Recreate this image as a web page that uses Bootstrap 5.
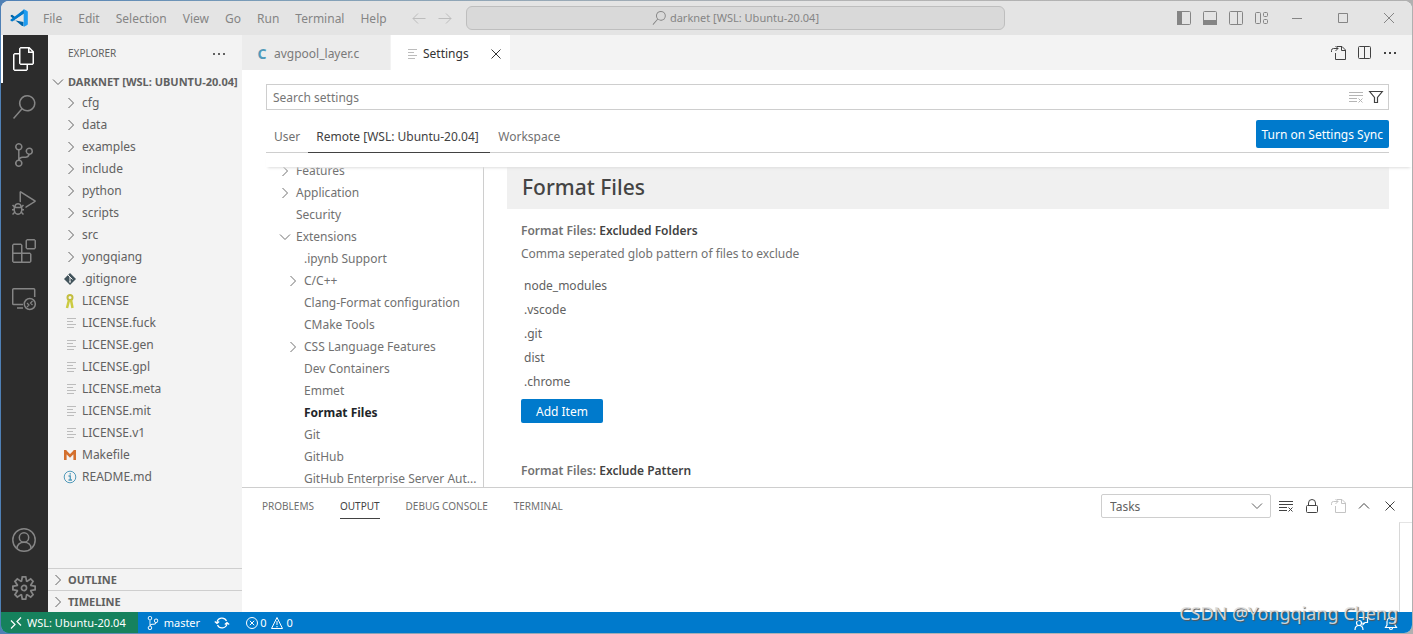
<!DOCTYPE html>
<html lang="en">
<head>
<meta charset="utf-8">
<meta name="viewport" content="width=device-width, initial-scale=1">
<title>Settings - darknet [WSL: Ubuntu-20.04] - Visual Studio Code</title>
<link href="https://cdn.jsdelivr.net/npm/bootstrap@5.3.0/dist/css/bootstrap.min.css" rel="stylesheet">
<style>
  :root { --blue: #007acc; --muted: #717171; --fg: #616161; --line: #cecece; }
  body { font-family: "Noto Sans", "Segoe UI", sans-serif; font-size: 12px; line-height: 22px; color: var(--fg); background: linear-gradient(90deg, #4f80b5, #7f9fb8 20%, #b4b4b4 60%, #b0b0b0); }
  a { color: inherit; text-decoration: none; }
  button { background: none; border: 0; padding: 0; color: inherit; }
  svg { display: block; flex: none; fill: none; stroke: currentColor; }
  .i16 { width: 16px; height: 16px; }
  .i24 { width: 24px; height: 24px; }
  .solid { fill: currentColor; stroke: none; }
  .frame { height: 100vh; padding: 1px; }
  .shell { border-radius: 8px; background: #fff; }

  .titlebar { height: 34px; background: #e4e4e4; color: #858585; padding-left: 9px; }
  .menus { gap: 16px; margin-left: 15px; padding-top: 2px; }
  .history { gap: 10px; margin: 0 13px 0 24px; color: #bdbdbd; }
  .command { flex: 0 1 38.5%; height: 24px; background: #d9d9d9; border: 1px solid #bebebe; border-radius: 6px; font-size: 11px; }
  .winbtn { width: 46px; height: 34px; }
  .layouts { gap: 10px; margin-right: 4px; }

  .activity { width: 47px; background: #2c2c2c; color: #858585; }
  .activity button { width: 47px; height: 48px; border-left: 2px solid transparent; padding-right: 4px; }
  .activity button.now { border-color: #fff; color: #fff; }

  .side { width: 194px; background: #f3f3f3; }
  .side h2 { font-size: 10px; line-height: 35px; padding: 1px 15px 0 20px; }
  .sect { font-size: 11px; line-height: 21px; font-weight: 700; padding-left: 2px; height: 21px; gap: 2px; width: 100%; }
  .split { border-top: 1px solid var(--line); }
  .node { height: 22px; gap: 4px; padding-left: 14px; }
  .node.folder { gap: 3px; padding-left: 15px; }

  .tabs { height: 35px; background: #f3f3f3; }
  .etab { height: 35px; padding: 2px 0 0 12px; }
  .etab.idle { width: 148px; margin-right: 1px; background: #ececec; color: #7a7a7a; }
  .etab.now { width: 119px; background: #fff; color: #333; padding-right: 6px; }
  .clang { font-weight: 700; font-size: 14px; color: #519aba; width: 16px; text-align: center; }
  .acts { gap: 10px; padding-right: 14px; color: #424242; }

  .settings { padding: 14px 23px 0 24px; }
  .query { border: 1px solid var(--line); height: 26px; padding-right: 4px; }
  .query input { border: 0; outline: 0; padding: 2px 6px 0; color: var(--fg); }
  .query input::placeholder { color: #767676; opacity: 1; }
  .scopes { height: 43px; border-bottom: 1px solid var(--line); padding-top: 10px; }
  .scopes a { padding: 6px 8px 0; height: 33px; color: var(--muted); }
  .scopes a.now { min-width: 182px; color: #424242; border-bottom: 1px solid #424242; }
  .btn-blue { background: var(--blue); color: #fff; border-radius: 2px; }
  .sync { height: 28px; padding: 1px 6px 0; }
  .veil { height: 14px; margin: 0 -23px 0 0; box-shadow: 0 3px 3px -2px #ddd; position: relative; }
  .toc { width: 218px; border-right: 1px solid var(--line); color: var(--muted); }
  .toc ul { margin: -7px 0 0; }
  .toc a { height: 22px; padding-left: 11px; gap: 3px; }
  .toc .sub a { padding-left: 19px; }
  .detail { margin-left: 23px; }
  .group { background: #f0f0f0; height: 42px; padding-left: 15px; font-size: 21px; line-height: 40px; font-weight: 500; color: #444; }
  .item { padding: 10px 14px 0; }
  .item h3 { font-size: 12px; line-height: 23px; font-weight: 600; color: #424242; }
  .item h3 span, .item p { color: var(--muted); }
  .item p { line-height: 23px; }
  .globs { margin: 9px 0 5px; padding-left: 3px; }
  .globs li { line-height: 24px; }
  .add { height: 24px; padding: 1px 15px 0; line-height: 23px; }
  .item + .item { padding-top: 36px; }

  .panel { height: 125px; border-top: 1px solid var(--line); }
  .phead { height: 36px; }
  .ptabs { gap: 26px; padding-left: 20px; font-size: 10px; color: #6f6f6f; }
  .ptabs a { height: 26px; padding: 3px 0; line-height: 20px; border-bottom: 1px solid transparent; }
  .ptabs a.now { color: #424242; border-color: #424242; }
  .channel { width: 170px; height: 24px; margin-right: 7px; padding: 1px 8px 0; font-size: 12px; line-height: 20px; border: 1px solid var(--line); border-radius: 2px; color: var(--fg);
    background-image: url("data:image/svg+xml,%3Csvg xmlns='http://www.w3.org/2000/svg' viewBox='0 0 16 16'%3E%3Cpath d='M3 5.5l5 5 5-5' fill='none' stroke='%23616161'/%3E%3C/svg%3E"); background-position: right 5px center; background-size: 16px; }
  .ruler { width: 13px; border-left: 1px solid #d8d8d8; border-top: 1px solid #e4e4e4; margin-top: -2px; }

  .status { height: 21px; background: var(--blue); color: #fff; font-size: 11px; line-height: 21px; padding-right: 13px; }
  .remote { background: #16825d; height: 21px; padding: 0 12px 0 7px; gap: 3px; }
  .gap-item { margin-left: 14px; }
  .watermark { right: 14px; bottom: 7px; font: 18px/26px "Noto Sans", sans-serif; color: rgba(225,225,225,.9); text-shadow: 1px 1px 1px #555; pointer-events: none; }
</style>
</head>
<body>
<svg width="0" height="0" class="position-absolute" aria-hidden="true">
  <symbol id="right" viewBox="0 0 16 16"><path d="M5.500 3l5 5-5 5"/></symbol>
  <symbol id="down" viewBox="0 0 16 16"><path d="M3 5.500l5 5 5-5"/></symbol>
  <symbol id="up" viewBox="0 0 16 16"><path d="M3 10.500l5-5 5 5"/></symbol>
  <symbol id="close" viewBox="0 0 16 16"><path d="M3.500 3.500l9 9m0-9l-9 9"/></symbol>
  <symbol id="dots" viewBox="0 0 16 16"><path d="M2 7h2v2H2zM7 7h2v2H7zM12 7h2v2h-2z" fill="currentColor" stroke="none"/></symbol>
  <symbol id="lines" viewBox="0 0 16 16"><path d="M5 3.500h9M5 6.500h6M5 9.500h9M5 12.500h7" stroke="#bcbcbc"/></symbol>
  <symbol id="clear" viewBox="0 0 16 16"><path d="M1 3.500h14M1 6.500h14M1 9.500h8M1 12.500h8M10.500 9.500l4 4m0-4l-4 4"/></symbol>
  <symbol id="goto" viewBox="0 0 16 16"><path d="M7 1.500h5l3.500 3.500v9.500h-10V8M11.500 1.500v4h4M1.500 7V5.500q0-2 2-2H8M5.500 1l2.500 2.500L5.500 6"/></symbol>
  <symbol id="lens" viewBox="0 0 24 24"><path class="solid" d="M15.250 0a8.250 8.250 0 0 0-6.180 13.720L1 22.880l1.120 1 8.050-9.120A8.251 8.251 0 1 0 15.250.01V0zm0 15a6.750 6.750 0 1 1 0-13.500 6.750 6.750 0 0 1 0 13.500z"/></symbol>
  <symbol id="branch" viewBox="0 0 24 24"><path class="solid" d="M21.007 8.222A3.738 3.738 0 0 0 15.045 5.200a3.737 3.737 0 0 0 1.156 6.583 2.988 2.988 0 0 1-2.668 1.670h-2.990a4.456 4.456 0 0 0-2.989 1.165V7.400a3.737 3.737 0 1 0-1.494 0v9.117a3.776 3.776 0 1 0 1.816.099 2.990 2.990 0 0 1 2.668-1.667h2.990a4.484 4.484 0 0 0 4.223-3.039 3.736 3.736 0 0 0 3.250-3.687zM4.565 3.738a2.242 2.242 0 1 1 4.484 0 2.242 2.242 0 0 1-4.484 0zm4.484 16.441a2.242 2.242 0 1 1-4.484 0 2.242 2.242 0 0 1 4.484 0zm8.221-9.715a2.242 2.242 0 1 1 0-4.485 2.242 2.242 0 0 1 0 4.485z"/></symbol>
</svg>

<div class="frame">
<div class="shell h-100 d-flex flex-column overflow-hidden position-relative">

  <header class="titlebar d-flex align-items-center flex-shrink-0">
    <svg width="18" height="18" viewBox="0 0 100 100" class="border-0" aria-label="Visual Studio Code"><g stroke="none"><path fill="#0065a9" d="M96 15L75 5 30 46 12 32 4 35v7l63 53 8 0V72L4 58v7l8 3 63-41z"/><path fill="#007acc" d="M4 65l8 4 63-44V5L4 58z"/><path fill="#1f9cf0" d="M72 98c2 1 4 0 6 0l18-9c2-1 3-3 3-5V16c0-2-1-4-3-5L78 2c-2-1-5-1-6 1 3-1 4 0 4 3v88c0 3-1 5-4 4z"/></g></svg>
    <nav class="menus d-flex" aria-label="Application menu">
      <a href="#">File</a><a href="#">Edit</a><a href="#">Selection</a><a href="#">View</a><a href="#">Go</a><a href="#">Run</a><a href="#">Terminal</a><a href="#">Help</a>
    </nav>
    <div class="history d-flex">
      <button aria-label="Go back"><svg class="i16" viewBox="0 0 16 16"><path d="M14.500 8.500H2M7 3.500l-5 5 5 5"/></svg></button>
      <button aria-label="Go forward"><svg class="i16" viewBox="0 0 16 16"><path d="M1.500 8.500H14M9 3.500l5 5-5 5"/></svg></button>
    </div>
    <button class="command d-flex align-items-center justify-content-center gap-1"><svg width="14" height="14"><use href="#lens"/></svg>darknet [WSL: Ubuntu-20.04]</button>
    <div class="layouts d-flex ms-auto">
      <button aria-label="Toggle side bar"><svg class="i16" viewBox="0 0 16 16"><rect x="1.500" y="1.500" width="13" height="13" rx="1"/><path class="solid" d="M1 1h5v14H1z"/></svg></button>
      <button aria-label="Toggle panel"><svg class="i16" viewBox="0 0 16 16"><rect x="1.500" y="1.500" width="13" height="13" rx="1"/><path class="solid" d="M1 10h14v5H1z"/></svg></button>
      <button aria-label="Toggle secondary side bar"><svg class="i16" viewBox="0 0 16 16"><rect x="1.500" y="1.500" width="13" height="13" rx="1"/><path d="M9.500 2v12"/></svg></button>
      <button aria-label="Customize layout"><svg class="i16" viewBox="0 0 16 16"><rect x="1.500" y="2.500" width="5" height="11" rx="1"/><rect x="9.500" y="2.500" width="4" height="4" rx="1"/><rect x="9.500" y="9.500" width="4" height="4" rx="1"/></svg></button>
    </div>
    <button class="winbtn d-flex align-items-center justify-content-center" aria-label="Minimize"><svg width="10" height="10"><path d="M0 5.500h10"/></svg></button>
    <button class="winbtn d-flex align-items-center justify-content-center" aria-label="Maximize"><svg width="10" height="10"><path d="M.5.5h9v9h-9z"/></svg></button>
    <button class="winbtn d-flex align-items-center justify-content-center" aria-label="Close"><svg width="10" height="10"><path d="M0 0l10 10M10 0L0 10"/></svg></button>
  </header>

  <div class="d-flex flex-grow-1 overflow-hidden">
    <nav class="activity d-flex flex-column flex-shrink-0" aria-label="Activity bar">
      <button class="now d-flex align-items-center justify-content-center" aria-label="Explorer"><svg class="i24 solid" viewBox="0 0 24 24"><path d="M17.500 0h-9L7 1.500V6H2.500L1 7.500v15.070L2.500 24h12.070L16 22.570V18h4.700l1.300-1.430V4.500L17.500 0zm0 2.120l2.380 2.380H17.500V2.120zm-3 20.380h-12v-15H7v9.070L8.500 18h6v4.500zm6-6h-12v-15H16V6h4.500v10.500z"/></svg></button>
      <button class="d-flex align-items-center justify-content-center" aria-label="Search"><svg class="i24"><use href="#lens"/></svg></button>
      <button class="d-flex align-items-center justify-content-center" aria-label="Source control"><svg class="i24"><use href="#branch"/></svg></button>
      <button class="d-flex align-items-center justify-content-center" aria-label="Run and debug"><svg class="i24 solid" viewBox="0 0 24 24"><path d="M10.940 13.500l-1.320 1.320a3.730 3.730 0 0 0-7.240 0L1.060 13.500 0 14.560l1.720 1.720-.22.22V18H0v1.500h1.500v.08c.077.489.214.966.41 1.420L0 22.940 1.060 24l1.650-1.650A4.308 4.308 0 0 0 6 24a4.310 4.310 0 0 0 3.290-1.650L10.940 24 12 22.940 10.090 21c.198-.464.336-.951.41-1.450v-.1H12V18h-1.500v-1.500l-.22-.22L12 14.560l-1.060-1.060zM6 13.500a2.250 2.250 0 0 1 2.250 2.250h-4.500A2.250 2.250 0 0 1 6 13.500zm3 6a3.330 3.330 0 0 1-3 3 3.330 3.330 0 0 1-3-3v-2.250h6v2.250zm14.760-9.900v1.260L13.500 17.370V15.600l8.500-5.370L9 2v9.460a5.070 5.070 0 0 0-1.500-.72V.63L8.640 0l15.120 9.600z"/></svg></button>
      <button class="d-flex align-items-center justify-content-center" aria-label="Extensions"><svg class="i24 solid" viewBox="0 0 24 24"><path d="M13.500 1.500L15 0h7.500L24 1.500V9l-1.500 1.500H15L13.500 9V1.500zm1.500 0V9h7.500V1.500H15zM0 15V6l1.500-1.500H9L10.500 6v7.500H18l1.500 1.500v7.500L18 24H1.500L0 22.500V15zm9-1.500V6H1.500v7.500H9zM9 15H1.500v7.500H9V15zm1.500 7.500H18V15h-7.500v7.500z"/></svg></button>
      <button class="d-flex align-items-center justify-content-center" aria-label="Remote explorer"><svg class="i24" viewBox="0 0 24 24" stroke-width="1.500"><path d="M11 17.500H1.700a1 1 0 0 1-1-1V2.700a1 1 0 0 1 1-1h20a1 1 0 0 1 1 1V10M5 21h6"/><circle cx="17.800" cy="17" r="5.500"/><path d="M15 16l2 2-2 2M20.500 14l-2 2 2 2" stroke-width="1.200"/></svg></button>
      <button class="d-flex align-items-center justify-content-center mt-auto" aria-label="Accounts"><svg class="i24" viewBox="0 0 24 24" stroke-width="1.500"><circle cx="12" cy="12" r="11.200"/><circle cx="12" cy="9.500" r="4.700"/><path d="M5 20.500c0-4 3-6.300 7-6.300s7 2.300 7 6.300"/></svg></button>
      <button class="d-flex align-items-center justify-content-center" aria-label="Manage"><svg class="i24 solid" viewBox="0 0 24 24"><path d="M19.850 8.750l4.150.83v4.840l-4.150.83 2.350 3.520-3.430 3.430-3.520-2.350-.83 4.150H9.580l-.83-4.150-3.520 2.350-3.430-3.430 2.350-3.520L0 14.420V9.580l4.150-.83L1.800 5.230 5.230 1.800l3.520 2.350L9.580 0h4.840l.83 4.150 3.520-2.350 3.430 3.430-2.350 3.520zm-1.570 5.070l4-.81v-2l-4-.81-.54-1.300 2.290-3.430-1.430-1.430-3.430 2.290-1.300-.54-.81-4h-2l-.81 4-1.300.54-3.430-2.290-1.430 1.430L6.380 8.900l-.54 1.300-4 .81v2l4 .81.54 1.300-2.290 3.430 1.430 1.430 3.430-2.290 1.300.54.81 4h2l.81-4 1.300-.54 3.430 2.290 1.430-1.430-2.290-3.430.54-1.300zm-8.186-4.672A3.430 3.430 0 0 1 12 8.570 3.440 3.440 0 0 1 15.430 12a3.430 3.430 0 1 1-5.336-2.852zm.956 4.274c.281.188.612.288.95.288A1.700 1.700 0 0 0 13.710 12a1.710 1.710 0 1 0-2.660 1.422z"/></svg></button>
    </nav>

    <aside class="side d-flex flex-column flex-shrink-0">
      <h2 class="d-flex align-items-center justify-content-between m-0 fw-normal">EXPLORER <button aria-label="More actions"><svg class="i16"><use href="#dots"/></svg></button></h2>
      <button class="sect d-flex align-items-center text-nowrap"><svg class="i16"><use href="#down"/></svg>DARKNET [WSL: UBUNTU-20.04]</button>
      <ul class="list-unstyled m-0 flex-grow-1">
        <li><a href="#" class="node folder d-flex align-items-center"><svg class="i16"><use href="#right"/></svg>cfg</a></li>
        <li><a href="#" class="node folder d-flex align-items-center"><svg class="i16"><use href="#right"/></svg>data</a></li>
        <li><a href="#" class="node folder d-flex align-items-center"><svg class="i16"><use href="#right"/></svg>examples</a></li>
        <li><a href="#" class="node folder d-flex align-items-center"><svg class="i16"><use href="#right"/></svg>include</a></li>
        <li><a href="#" class="node folder d-flex align-items-center"><svg class="i16"><use href="#right"/></svg>python</a></li>
        <li><a href="#" class="node folder d-flex align-items-center"><svg class="i16"><use href="#right"/></svg>scripts</a></li>
        <li><a href="#" class="node folder d-flex align-items-center"><svg class="i16"><use href="#right"/></svg>src</a></li>
        <li><a href="#" class="node folder d-flex align-items-center"><svg class="i16"><use href="#right"/></svg>yongqiang</a></li>
        <li><a href="#" class="node d-flex align-items-center"><svg class="i16" viewBox="0 0 16 16"><path fill="#41535b" stroke="none" d="M8 2l6 6-6 6-6-6z"/><path stroke="#f3f3f3" d="M6 4l2 2v5M8 6l2.500 2.500"/><circle cx="8" cy="11" r=".8" fill="#f3f3f3" stroke="none"/></svg>.gitignore</a></li>
        <li><a href="#" class="node d-flex align-items-center"><svg class="i16" viewBox="0 0 16 16"><circle cx="8" cy="4.500" r="2.500" stroke="#c3bd3e" stroke-width="2"/><path d="M7 7l-2 8M9 7l1.500 8" stroke="#cbcb41" stroke-width="2.500"/></svg>LICENSE</a></li>
        <li><a href="#" class="node d-flex align-items-center"><svg class="i16"><use href="#lines"/></svg>LICENSE.fuck</a></li>
        <li><a href="#" class="node d-flex align-items-center"><svg class="i16"><use href="#lines"/></svg>LICENSE.gen</a></li>
        <li><a href="#" class="node d-flex align-items-center"><svg class="i16"><use href="#lines"/></svg>LICENSE.gpl</a></li>
        <li><a href="#" class="node d-flex align-items-center"><svg class="i16"><use href="#lines"/></svg>LICENSE.meta</a></li>
        <li><a href="#" class="node d-flex align-items-center"><svg class="i16"><use href="#lines"/></svg>LICENSE.mit</a></li>
        <li><a href="#" class="node d-flex align-items-center"><svg class="i16"><use href="#lines"/></svg>LICENSE.v1</a></li>
        <li><a href="#" class="node d-flex align-items-center"><svg class="i16" viewBox="0 0 16 16"><path d="M3.300 13V3M12.700 13V3M3 3.800l5 5 5-5" stroke="#d4702e" stroke-width="2.600"/></svg>Makefile</a></li>
        <li><a href="#" class="node d-flex align-items-center"><svg class="i16" viewBox="0 0 16 16"><g stroke="#519aba"><circle cx="8" cy="8" r="5.800"/><path d="M6.500 7h1.800v4M6.500 11h3.500M7.500 4.800h1.500" stroke-width="1.300"/></g></svg>README.md</a></li>
      </ul>
      <div class="split"><button class="sect d-flex align-items-center"><svg class="i16"><use href="#right"/></svg>OUTLINE</button></div>
      <div class="split"><button class="sect d-flex align-items-center"><svg class="i16"><use href="#right"/></svg>TIMELINE</button></div>
    </aside>

    <main class="d-flex flex-column flex-grow-1 overflow-hidden">
      <div class="tabs d-flex align-items-center flex-shrink-0">
        <a href="#" class="etab idle d-flex align-items-center gap-1"><span class="clang">C</span>avgpool_layer.c</a>
        <div class="etab now d-flex align-items-center gap-1"><svg class="i16"><use href="#lines"/></svg><a href="#">Settings</a><button class="ms-auto" aria-label="Close tab"><svg class="i16"><use href="#close"/></svg></button></div>
        <div class="acts d-flex ms-auto">
          <button aria-label="Open settings (JSON)"><svg class="i16"><use href="#goto"/></svg></button>
          <button aria-label="Split editor"><svg class="i16" viewBox="0 0 16 16"><rect x="2.500" y="1.500" width="12" height="12" rx="1"/><path d="M8.500 2v11"/></svg></button>
          <button aria-label="More actions"><svg class="i16"><use href="#dots"/></svg></button>
        </div>
      </div>

      <section class="settings d-flex flex-column flex-grow-1 overflow-hidden">
        <div class="query d-flex align-items-center flex-shrink-0">
          <input type="text" class="flex-grow-1" placeholder="Search settings" aria-label="Search settings">
          <button class="me-1" aria-label="Clear settings search"><svg class="i16" color="#b5b5b5"><use href="#clear"/></svg></button>
          <button aria-label="Filter settings"><svg class="i16" viewBox="0 0 16 16" color="#424242"><path d="M1.700 2.500h12.600L9.500 8.500v5h-3v-5z" stroke-width="1.200"/></svg></button>
        </div>
        <nav class="scopes d-flex flex-shrink-0" aria-label="Settings scope">
          <a href="#">User</a><a href="#" class="now">Remote [WSL: Ubuntu-20.04]</a><a href="#">Workspace</a>
          <button class="btn-blue sync ms-auto">Turn on Settings Sync</button>
        </nav>
        <div class="veil flex-shrink-0"></div>
        <div class="d-flex flex-grow-1 overflow-hidden">
          <nav class="toc flex-shrink-0 overflow-hidden" aria-label="Settings groups">
            <ul class="list-unstyled">
              <li><a href="#" class="d-flex align-items-center"><svg class="i16"><use href="#right"/></svg>Features</a></li>
              <li><a href="#" class="d-flex align-items-center"><svg class="i16"><use href="#right"/></svg>Application</a></li>
              <li><a href="#" class="d-flex align-items-center"><span class="i16"></span>Security</a></li>
              <li><a href="#" class="d-flex align-items-center"><svg class="i16"><use href="#down"/></svg>Extensions</a></li>
              <li class="sub"><a href="#" class="d-flex align-items-center"><span class="i16"></span>.ipynb Support</a></li>
              <li class="sub"><a href="#" class="d-flex align-items-center"><svg class="i16"><use href="#right"/></svg>C/C++</a></li>
              <li class="sub"><a href="#" class="d-flex align-items-center"><span class="i16"></span>Clang-Format configuration</a></li>
              <li class="sub"><a href="#" class="d-flex align-items-center"><span class="i16"></span>CMake Tools</a></li>
              <li class="sub"><a href="#" class="d-flex align-items-center"><svg class="i16"><use href="#right"/></svg>CSS Language Features</a></li>
              <li class="sub"><a href="#" class="d-flex align-items-center"><span class="i16"></span>Dev Containers</a></li>
              <li class="sub"><a href="#" class="d-flex align-items-center"><span class="i16"></span>Emmet</a></li>
              <li class="sub"><a href="#" class="d-flex align-items-center fw-bold text-dark"><span class="i16"></span>Format Files</a></li>
              <li class="sub"><a href="#" class="d-flex align-items-center"><span class="i16"></span>Git</a></li>
              <li class="sub"><a href="#" class="d-flex align-items-center"><span class="i16"></span>GitHub</a></li>
              <li class="sub"><a href="#" class="d-flex align-items-center text-nowrap"><span class="i16"></span>GitHub Enterprise Server Aut...</a></li>
            </ul>
          </nav>
          <div class="detail flex-grow-1">
            <h1 class="group m-0">Format Files</h1>
            <div class="item">
              <h3 class="m-0"><span>Format Files:</span> Excluded Folders</h3>
              <p class="m-0">Comma seperated glob pattern of files to exclude</p>
              <ul class="globs list-unstyled"><li>node_modules</li><li>.vscode</li><li>.git</li><li>dist</li><li>.chrome</li></ul>
              <button class="btn-blue add">Add Item</button>
            </div>
            <div class="item">
              <h3 class="m-0"><span>Format Files:</span> Exclude Pattern</h3>
            </div>
          </div>
        </div>
      </section>

      <section class="panel d-flex flex-column flex-shrink-0">
        <div class="phead d-flex align-items-center">
          <nav class="ptabs d-flex" aria-label="Panel views"><a href="#">PROBLEMS</a><a href="#" class="now">OUTPUT</a><a href="#">DEBUG CONSOLE</a><a href="#">TERMINAL</a></nav>
          <select class="channel form-select ms-auto" aria-label="Output channel"><option>Tasks</option></select>
          <div class="acts d-flex align-items-center">
            <button aria-label="Clear output"><svg class="i16"><use href="#clear"/></svg></button>
            <button aria-label="Lock scrolling"><svg class="i16" viewBox="0 0 16 16"><rect x="2.500" y="7.500" width="11" height="7" rx="1"/><path d="M4.500 7.500V5a3.500 3.500 0 0 1 7 0v2.500"/></svg></button>
            <button aria-label="Open log file" disabled><svg class="i16" color="#c4c4c4"><use href="#goto"/></svg></button>
            <button aria-label="Maximize panel"><svg class="i16"><use href="#up"/></svg></button>
            <button aria-label="Close panel"><svg class="i16"><use href="#close"/></svg></button>
          </div>
        </div>
        <div class="d-flex flex-grow-1 justify-content-end"><div class="ruler"></div></div>
      </section>
    </main>
  </div>

  <footer class="status d-flex align-items-center flex-shrink-0">
    <a href="#" class="remote d-flex align-items-center"><svg class="i16" viewBox="0 0 16 16"><path d="M3 5.500l4 4-4 4M13 2.500l-4 4 4 4" stroke-width="1.200"/></svg>WSL: Ubuntu-20.04</a>
    <a href="#" class="d-flex align-items-center gap-1 ms-2"><svg width="14" height="14"><use href="#branch"/></svg>master</a>
    <a href="#" class="gap-item" aria-label="Synchronize"><svg class="i16" viewBox="0 0 16 16" stroke-width="1.200"><path d="M3 7.500a5 5 0 0 1 9.500-1.500M13 8.500A5 5 0 0 1 3.500 10M.8 6.500l2.200 2 2.200-2M10.800 9.500l2.200-2 2.200 2"/></svg></a>
    <a href="#" class="gap-item d-flex align-items-center"><svg class="i16" viewBox="0 0 16 16"><circle cx="8" cy="8" r="5.500"/><path d="M5.800 5.800l4.400 4.400m0-4.400l-4.400 4.400"/></svg><span class="me-1">0</span><svg class="i16" viewBox="0 0 16 16"><path d="M7 2.500l5.500 11h-11zM7 6v4M7 11v1.300"/></svg>0</a>
    <a href="#" class="ms-auto gap-item" aria-label="Feedback"><svg class="i16" viewBox="0 0 16 16" stroke-width="1.200"><circle cx="6" cy="8" r="2.500"/><path d="M2 15c0-3 1.500-4.500 4-4.500s4 1.500 4 4.500M6 2.500h8.500v5H12l-2 2v-2"/></svg></a>
    <a href="#" class="gap-item" aria-label="Notifications"><svg class="i16" viewBox="0 0 16 16" stroke-width="1.200"><path d="M2.500 12.500L4 10V6.500a4 4 0 0 1 8 0V10l1.500 2.500zM6.500 13a1.500 1.500 0 0 0 3 0"/></svg></a>
  </footer>

  <div class="watermark position-absolute text-nowrap">CSDN @Yongqiang Cheng</div>
</div>
</div>
<script src="https://cdn.jsdelivr.net/npm/bootstrap@5.3.0/dist/js/bootstrap.bundle.min.js"></script>
</body>
</html>
